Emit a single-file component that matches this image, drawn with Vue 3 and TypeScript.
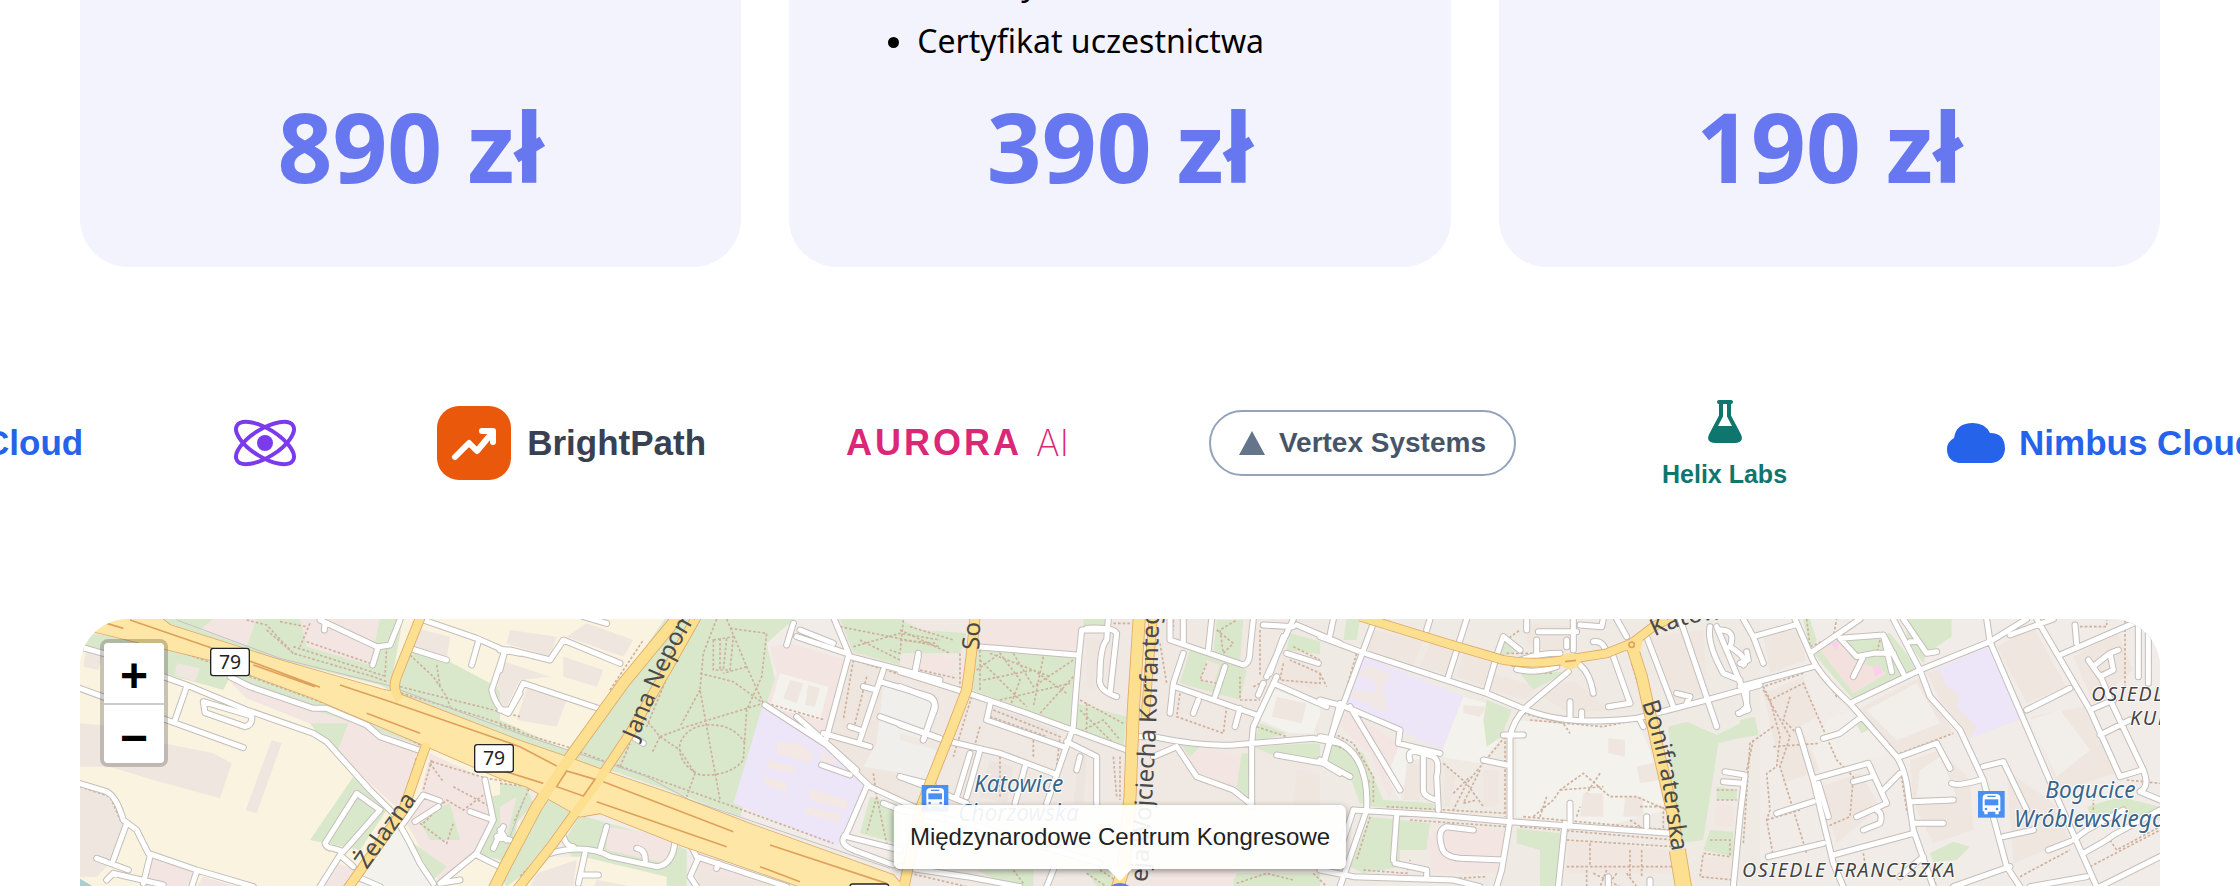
<script setup lang="ts">
interface Plan {
  price: string
  perks: string[]
}

interface Area {
  fill: string
  d: string
}

interface Tile {
  x: number
  areas: Area[]
  paths: string
  streets: string
}

interface MainRoad {
  width: number
  d: string
}

const plans: Plan[] = [
  { price: '890 zł', perks: [] },
  { price: '390 zł', perks: ['Przerwy', 'Certyfikat uczestnictwa'] },
  { price: '190 zł', perks: [] },
]

const partners: string[] = ['nimbus', 'atom', 'bright', 'aurora', 'vertex', 'helix', 'nimbus']

const green = '#d9e8cb'
const pink = '#f3e5e2'
const built = '#efe6e0'
const cream = '#faf3df'
const pale = '#f4f2ed'
const school = '#ede5f8'

const tiles: Tile[] = [
  {
    x: 0,
    areas: [
      { fill: cream, d: 'M-20 0H1320V830H-20Z' },
      { fill: green, d: 'M-20 60L100 80L400 145L1020 400L1010 425L700 300L450 200L430 240L250 190L-20 110Z' },
      { fill: green, d: 'M250 20H970L930 240L900 225L600 150L270 60Z' },
      { fill: pink, d: 'M660 27H900L870 165L680 110ZM400 27H530L500 110L360 60Z' },
      { fill: green, d: 'M980 110L1100 150L1250 230L1320 330V400L950 250Z' },
      { fill: built, d: 'M1010 55L1110 80L1100 150L990 110ZM1270 140L1310 150L1285 245L1250 235ZM290 160L360 175L345 215L285 195ZM20 110L70 130L55 180L10 170Z' },
      { fill: pink, d: 'M430 195L700 300L1020 405L1010 430L970 610L780 440L740 360L500 265Z' },
      { fill: green, d: 'M690 340L805 340L770 430L720 380ZM820 500L920 600L840 720L690 690Z' },
      { fill: built, d: 'M0 340L110 350L250 400L400 430L455 460L420 565L220 510L90 470L0 470ZM575 390L605 400L530 610L497 600ZM-20 530L80 550L130 640L90 760L50 800H-20Z' },
      { fill: pale, d: 'M860 740L960 640L1060 830H820Z' },
      { fill: pink, d: 'M1050 430L1200 500L1240 620L1190 740L1080 820L980 640L1020 560Z' },
      { fill: green, d: 'M1230 560L1330 540L1290 760L1190 730L1230 640ZM1010 620L1110 580L1140 690L1050 690ZM1000 700L1100 770L1060 810Z' },
      { fill: pink, d: 'M220 740L340 785L320 830H190ZM370 800L470 830H350ZM720 830L770 760L830 780L800 830Z' },
      { fill: '#a9cfd4', d: 'M-10 800L40 830H-10Z' },
    ],
    paths:
      'M500 30L560 45L640 130L880 200L920 215M640 110L920 200M560 60L640 130M690 40L660 110M680 95L870 160M600 35L680 50M920 110L915 200M270 115L470 185L900 340L1020 405M990 135L1060 200L1100 260L1110 290M960 230L1320 320M950 245L1200 320L1320 360M1070 165L1080 230M1055 455L1220 505L1320 520M1050 460L1090 515M1120 530L1230 590M1030 640L1100 570L1150 600L1230 540M1020 640L1100 700L1120 640M1055 450L1030 540M975 560L1010 440M0 530L90 560L125 640',
    streets:
      'M-20 105L70 130M250 200L320 225L500 300L700 370L740 395L870 540L940 610L990 700L1020 760L1060 820M-20 228L260 330L490 413M320 230L285 330M370 275L515 318Q518 345 495 350L375 308ZM450 200L510 230L700 295L740 295L860 345L900 380L1030 425M720 30L890 110M735 40L733 60M960 30L930 105L895 110L878 165M990 115L1100 150M1030 30L1190 85L1270 120L1320 130M1195 95L1175 165M1275 120L1235 240Q1250 300 1285 310L1320 250M830 550L735 700Q740 715 760 715L790 725L900 600ZM-20 515L80 545Q110 560 130 630L170 660L205 730L350 780L520 830M140 640L100 750M50 745L145 780M210 740L190 820M350 785L335 830M80 810L100 790L250 825M720 830L780 735L820 770M830 800L900 830M970 640L1030 555L1080 573M1005 635L1075 590M1215 510L1240 630L1190 730L1080 820L1140 810M1190 735L1260 770M1170 605L1240 630M1270 650L1240 715M1250 680L1290 690',
  },
  {
    x: 1260,
    areas: [
      { fill: cream, d: 'M0 20H540L300 380L200 420L0 340Z' },
      { fill: built, d: 'M190 140L310 180L290 230L190 200ZM80 235L200 270L170 350L50 330ZM30 60L170 80L150 140L20 100ZM0 150L150 200L60 210L20 290L0 280ZM260 40L400 90L370 140L200 80Z' },
      { fill: green, d: 'M500 20L310 290L200 420L0 330V370L180 450L330 480L560 560L720 620L770 480L830 230L800 100L890 20Z' },
      { fill: pink, d: 'M810 110L870 100L1040 150L980 390L800 280L830 190Z' },
      { fill: pale, d: 'M840 190L985 230L960 330L810 290Z' },
      { fill: built, d: 'M870 210L910 220L890 280L850 265ZM925 225L960 235L945 290L915 285Z' },
      { fill: built, d: 'M1000 20H1320V600L1100 530L980 400L1050 140Z' },
      { fill: green, d: 'M1020 27H1320V200L1060 125Z' },
      { fill: '#f1efec', d: 'M1150 220L1300 270L1280 500L1090 470L1130 400Z' },
      { fill: school, d: 'M790 280L980 420L1100 530L1040 660L1010 710L700 580Z' },
      { fill: '#f3e8e4', d: 'M830 395L900 400L940 430L930 460L830 430ZM805 450L885 470V490L805 475ZM795 500L860 520V550L790 520ZM930 535L1040 570V600L930 570ZM915 590L1020 610V640L915 610ZM960 420L1010 450L970 480Z' },
      { fill: green, d: 'M1110 560L1190 580V700L1080 670ZM0 520L80 530L100 580L0 700ZM150 560L225 590L60 800L20 830L0 800ZM240 615L500 690L560 720L560 830H500L230 760L190 700Z' },
      { fill: pink, d: 'M320 650L520 680L500 760L320 720ZM590 750L720 780L860 830H590ZM0 590L50 560L20 680L0 690Z' },
      { fill: cream, d: 'M50 830L160 740L250 740L500 800V830Z' },
      { fill: built, d: 'M110 790L230 750L220 830H90ZM290 810L400 830H280ZM590 780L800 820V830H590Z' },
    ],
    paths:
      'M650 27L610 130L600 240L620 350L660 570M680 27L740 170L790 280M690 55L800 70L785 200L740 300L730 450Q690 500 600 495Q530 460 540 400Q560 350 620 345Q700 340 735 400M600 190L700 215L790 280L560 350L480 380L430 320M480 380L540 420L585 490L560 560M640 90L700 80L690 180L640 180ZM660 85V180M680 85L670 180M740 170L670 190M600 240L540 350M480 380L455 430M0 345L100 380L200 410L330 460M350 465L700 590L1000 700M560 60L440 350M360 470L390 400M0 520L90 530L40 640M250 620L330 600L540 690M240 610L60 800M150 560L230 580M800 280L975 330M1060 150L1030 330M1100 200L1060 360M1060 150L1320 230M1120 490L1130 560M1110 540L1300 600M1130 560L1100 670M1130 560L1160 700M1210 30L1200 130L1170 120M1020 50L1320 110M1060 110L1200 70L1320 90M1080 90L1200 150M330 240L430 90',
    streets:
      'M0 120L30 120L150 150L190 90L360 160M250 20L320 40M0 300L30 300L70 220L310 300M0 180L15 120M880 40L860 105M900 60L1000 100M1000 20L1050 140L1320 210M890 80L1040 130M1045 140L975 400M1150 180L1080 390M1090 230L1130 240M1140 215L1290 260Q1310 270 1300 300L1270 390M1140 320L1320 385M1255 140L1245 190M1050 350L1080 360M970 370L1110 410M795 285L980 405L1110 530L1240 590M890 320L1070 480M965 465L1050 495M1100 530L1040 670Q1010 700 1060 720L1180 765M1040 680L1200 720M1200 500L1300 525M1150 580L1200 600M405 385L430 400M150 730Q260 700 330 740L470 770Q520 765 525 690M320 650L300 720M410 715Q440 720 435 760M255 730L235 820M250 795L295 795M570 700L590 740L800 810L860 830M655 760L650 775M595 745L570 800L590 830M190 680Q200 710 220 710M0 660L20 690',
  },
  {
    x: 2460,
    areas: [
      { fill: '#f0e8e3', d: 'M0 20H1320V830H0Z' },
      { fill: '#f1efec', d: 'M0 240L100 280L60 385L0 370ZM0 390L110 420L80 510L0 500Z' },
      { fill: green, d: 'M0 27L60 60L200 70L180 130L0 130ZM230 110L525 145L510 350L215 240ZM530 280L680 320L670 410L520 370ZM550 27H620V50H550Z' },
      { fill: pink, d: 'M240 27H540L530 130L230 100ZM60 130L170 150L160 200L50 180ZM840 410L1050 440V580L890 500Z' },
      { fill: green, d: 'M870 120L960 140L1040 180L1020 270L840 220ZM950 30H1030L1020 160L940 130ZM1080 340L1160 370L1060 400ZM1060 410L1240 400L1320 410V450L1270 460L1130 440ZM1025 430H1050V570L1010 530ZM1170 70L1320 110V140L1160 120ZM840 400L900 410L870 440Z' },
      { fill: built, d: 'M920 150L960 165L940 225L900 210Z' },
      { fill: pale, d: 'M1110 235L1270 290L1240 370L1170 370L1080 330ZM1270 130L1320 140V270L1260 250Z' },
      { fill: built, d: 'M1130 260L1220 280L1205 340L1115 320ZM1150 140L1260 180L1250 240L1140 210ZM560 80L600 90L580 240L560 230ZM1190 480L1320 510V590H1180Z' },
      { fill: '#ece5df', d: 'M280 290L470 360L480 400L270 330ZM270 450L340 470L320 580L240 560ZM540 420L560 440L550 580H520Z' },
      { fill: green, d: 'M230 780H400V830H330ZM560 785L640 780V830H590ZM990 830L1010 790L1280 790V830Z' },
      { fill: pink, d: 'M760 780H1000V830H740Z' },
    ],
    paths:
      'M0 60L150 130M0 90L110 100M30 50L160 90M230 180L300 130L360 210L330 290M340 130L400 230L520 150M250 210L400 180L500 250M240 150L380 290M430 140L400 290M520 200L420 310M270 130L450 200M300 270L510 220M540 270L670 340M530 370L610 330L660 390M540 300L640 400M560 280L560 370M690 40H640M280 300L480 380L470 470M270 320L440 380M400 390V440M240 350L220 420M300 440V560M60 180L170 205M215 260L160 440M180 130V230M240 120V240M640 440L650 560M660 440V570M780 100L800 220M920 160L900 210L950 220M1020 200L1020 270L1080 270M840 250L830 320L970 370L980 290M1060 230L1100 210M950 60L1000 100L970 130L960 60L1010 30M1080 60V200M1150 160L1140 210L1260 220V190L1170 150M1180 110L1260 150M1070 350L1160 380M820 30V60M30 790L200 830M560 790L620 830M600 780L660 820M1010 820L1100 790L1180 810M1240 790L1280 830M340 780L370 820',
    streets:
      'M0 185L190 245L380 310L680 420M230 110L530 135M0 230L90 265Q115 280 100 310L70 390M55 130L45 185M545 60L620 60M545 60Q530 200 520 350L440 580M625 27L620 90Q600 110 600 200Q590 240 650 260M560 55Q640 50 650 70L630 250M0 345L130 390L300 430L460 490M210 430L170 560M240 420L200 560M260 330L490 410M270 285L260 330M375 470L345 580M500 395L590 440L590 585M540 440L530 480M0 500L80 530L200 580M810 27L810 90L1030 165Q1050 160 1050 120L1060 27M850 27L850 100M935 27L925 120M850 130L820 220L810 310M825 230L1070 315M975 170L945 260M895 270L880 310M1020 295L1005 350M760 380Q900 410 1000 405L1240 385L1320 400M700 380L760 380M760 440L830 410L890 500L1000 540L1050 580M1180 27L1100 200M1150 80L1110 190M1190 45L1320 100M1090 45L1180 50M1130 200L1060 350L1055 400L1055 590M1120 220L1280 290M1090 220L1075 255M1160 130L1255 160M1130 435L1270 460L1320 490M1320 280L1275 450M0 770L200 800L360 830M460 780L440 830M0 600L200 640L600 760',
  },
  {
    x: 3720,
    areas: [
      { fill: '#f0eae5', d: 'M0 20H1320V830H0Z' },
      { fill: built, d: 'M160 60L310 90L280 170L130 120ZM330 100L410 120L380 190L300 170ZM430 130L520 160L490 230L410 200ZM520 190L650 230L620 270L510 240ZM650 250L760 210L870 300L750 310ZM620 40L760 50L740 130L620 110ZM990 80L1150 60L1160 250L1060 280Z' },
      { fill: school, d: 'M125 135L430 260L365 420L80 280Z' },
      { fill: '#f1e8e6', d: 'M150 165L215 195L190 230L205 310L90 260L100 240L170 245L160 210L110 195Z' },
      { fill: pink, d: 'M80 300L110 320L240 400L240 470L210 570L150 430L60 350Z' },
      { fill: pale, d: 'M430 260L500 280L540 390L480 460L360 440ZM240 400L360 440L270 450L240 570L200 500ZM590 330Q800 350 950 330L990 420L1040 600L850 650L590 620Z' },
      { fill: green, d: 'M500 270L575 300L545 380L500 410L490 330ZM1045 350L1100 335L1190 375L1300 320L1315 370L1195 400L1150 690L1080 700L1060 540ZM30 380L130 430L190 570L340 580V600L160 590L120 580L90 500L20 450ZM150 620L330 640L320 720H240V770L130 790L90 770ZM590 655L720 670V830H660V720L590 700ZM1190 530L1250 540V570L1190 570ZM1170 660L1240 665V740L1150 720ZM80 27H120L110 90L70 90ZM550 80L600 120L540 140ZM600 190L740 185L640 240Z' },
      { fill: built, d: 'M865 385L915 390V440L865 430ZM950 470L1010 455L1020 510L960 520ZM790 550H850V620H780ZM915 560H970V620H910ZM260 460H300V570H250ZM375 470L410 490L390 590H370ZM490 480H535V590H490ZM430 285L500 290L480 320L430 310Z' },
      { fill: pink, d: 'M370 640L560 660L550 790L340 790L320 690Z' },
      { fill: '#f1e6e0', d: 'M740 690L1050 720V790H740ZM1150 740H1240V810H1140ZM1190 580L1240 590V650H1180Z' },
    ],
    paths:
      'M610 310L730 340L750 370M630 330L850 350L950 330M555 380L440 520L400 600M370 460L440 520L490 590M480 480L430 580L470 570M400 550L450 500M555 380V620M640 620L700 570L720 540L790 490L870 560L950 560L1040 600M840 490L800 550M720 540L850 530M680 560L660 620M200 590L560 610M270 630L560 650M610 620L1050 660M770 620L780 590M960 590H1030V660M930 630L960 650M600 650L1060 690M740 690L1060 710M810 700V770M930 720V800M965 720V800M740 770H1060M800 780V830M860 780L840 830M920 790L950 830M820 790L900 830M890 790L860 830M40 370L100 400L160 500V580M30 400L100 430L150 520M1300 390L1280 480M1190 540H1250M1190 570H1250M1170 690H1230V740L1150 730L1140 800L1240 810M935 160L965 260M130 780L260 790L270 750M320 810L500 800M150 620L110 750M545 100L600 60M560 130L650 130M590 185L700 190M110 130L60 300L30 390M0 190L20 230',
    streets:
      'M0 80L120 125L500 250L620 300Q750 350 950 325L1160 270L1320 225M160 40L30 390L10 460M320 60L330 27M440 27L385 200M525 155L500 240M550 80L525 150M550 80L600 120M40 27L30 75M620 27V60M655 65H770M650 90V140M580 160Q640 130 720 130M590 178Q650 192 710 170M740 90V110M760 27V120M850 27L845 50L780 45M820 95Q850 90 860 130M745 185L620 290Q580 330 570 380L570 630L545 780L530 830M550 375H610M780 165Q810 190 820 250M880 140L930 280L865 290M750 275V325M785 305V330M890 27L920 80M980 80L1060 290M1080 27L1190 350M1170 50Q1160 100 1210 190L1260 210M1190 50L1270 240L1285 300L1255 310M1200 60Q1250 60 1230 110Q1290 150 1270 165M1070 250L1110 260L1100 280M960 330L970 350M0 270L75 290L240 360L235 400L360 430M90 290L240 540M0 380Q150 400 140 600L60 830M0 450L90 500M270 450Q260 420 290 425L340 440Q360 450 350 500L355 600M310 440V540Q310 560 350 570M100 600L350 615L570 635L1050 670M100 600L70 690M490 450L560 465M750 580V640M735 640L715 830M980 620V650M230 615L220 750M225 760L320 780V800M460 660L380 650Q350 660 365 710Q370 740 420 745L550 750M0 780L100 800L400 810L480 830M1215 485L1275 495L1260 620L1240 830M1210 515L1265 520M865 800V830M990 810V830',
  },
  {
    x: 4980,
    areas: [
      { fill: '#f1ece7', d: 'M60 20H1300V830H60Z' },
      { fill: built, d: 'M350 300L540 200L640 370L480 440ZM70 80L170 60L200 150L90 190ZM70 250L190 200L230 320L180 350L240 480L130 520ZM240 530L360 490L420 590L290 700ZM510 450L600 420L690 510L700 660L580 700L520 580ZM770 110L880 50L980 230L860 280ZM1000 140L1130 60L1180 180L1060 280ZM870 320L1030 290L1130 490L960 540ZM800 480L940 580L990 690L820 760Z' },
      { fill: '#f2efea', d: 'M380 300L530 220L600 340L470 390ZM260 330L340 300L450 430L240 490L220 420ZM870 330L960 300L1050 420L950 500ZM540 480L600 440L650 560L530 560Z' },
      { fill: green, d: 'M220 130L290 90L450 70L540 180L340 270ZM500 27H635V80L560 130L550 160L500 90ZM0 330L45 320L55 375L0 385ZM350 345L370 330L385 360L365 370ZM570 730L640 695L690 710L650 750L580 755ZM1040 590L1140 560L1260 590V630L1050 610ZM190 27H210L230 90L210 120Z' },
      { fill: '#f3e1de', d: 'M240 120L300 90L340 150L400 170L440 190L340 250Z' },
      { fill: '#fbd0ec', d: 'M400 170L420 165L425 190L405 200ZM270 100L300 90L290 120Z' },
      { fill: school, d: 'M560 190L755 105L850 325L690 385L600 270Z' },
      { fill: '#f0e6e0', d: 'M560 190L600 180L620 230L660 250L650 290L710 350L690 385L600 270Z' },
    ],
    paths:
      'M190 190L70 230L90 270L190 220L290 450L340 500L330 620L260 650M90 270L120 380L110 470L80 490L90 600L80 630L100 740M70 240L150 380L120 470L200 730M100 350L30 400L10 700M150 260L130 330L180 380M100 410L240 400M210 120L290 260L330 270M200 27L210 110L280 80L290 27M420 90L410 130M480 430L640 370M550 170L760 85M80 630L180 600M840 800L990 720M1050 770L1260 660M1110 690L1130 720L1260 650M1155 30V230M1020 50H1100V30M1060 600V570M1160 510L1260 520M480 470L500 600L590 830M370 730L380 790',
    streets:
      'M10 27L40 80L165 45M40 80L70 160M0 160L25 150L20 125M0 230L220 170M20 230L20 290L0 310M165 27L210 130Q230 190 330 280L470 440Q490 470 500 520L520 660L580 830M210 130L360 27M300 85L430 75L490 190M300 85L350 140L400 130L460 130M430 75L455 185M370 140L340 200M340 275L540 180L750 95L860 27M460 27L540 180L570 260L660 360L730 510L800 770L840 830M490 27L560 130L590 125M510 95L525 95M740 27L750 95L950 560L1070 830M810 75L940 27M890 27L1050 300L1140 500M960 135L1180 40M1005 45L1010 100M860 300L990 235M1045 150L1080 200L1120 180L1110 130L1065 165M1110 130L1135 120M1050 300L1120 270M1080 195L1120 290L1210 480Q1230 530 1200 545L1260 570M1080 375L1170 330M1140 500L1205 480M1195 50V200M1225 70V220M365 320L300 370L250 385M175 360L220 510L280 760L310 830M225 505L385 460L440 580L350 620M235 520L265 620M340 515L395 500M430 540L480 490M110 610L220 575M85 740L250 700M370 660L420 640Q430 610 410 600M480 440L590 400L630 475M515 575L640 570M520 640L610 640M280 735L520 670M635 520Q650 530 720 510M730 470L790 455L860 600M790 680L880 660M925 720L990 695M1000 690L1040 660L1150 600M1030 730L1100 690L1120 675L1260 600M640 830L810 770M870 830L1040 800M1080 830L1260 740M480 800L550 740',
  },
]

const mainRoads: MainRoad[] = [
  { width: 26, d: 'M1022 20L950 200Q935 240 960 270M1040 400L970 600L800 840' },
  { width: 32, d: 'M1795 20L1630 220L1450 470L1370 590L1280 760L1240 840' },
  { width: 26, d: 'M1850 20L1760 180L1650 370L1550 520L1420 700L1310 840' },
  { width: 28, d: 'M2685 20Q2675 140 2660 240L2610 370L2550 520L2520 600L2470 840' },
  { width: 34, d: 'M3178 20L3160 300L3150 560L3130 780L3110 840' },
  { width: 22, d: 'M3220 20L3205 200L3195 330' },
  { width: 24, d: 'M3840 20L4100 100L4270 150Q4360 165 4440 152L4580 130L4655 100L4720 50L4780 20' },
  { width: 32, d: 'M4655 105L4685 200L4730 400L4780 620L4790 700' },
  { width: 46, d: 'M4792 720L4812 840' },
]

const highway =
  'M-20 20L240 20L270 45L600 150L905 238L940 245L1320 392L1460 440L1590 488L1800 560L2020 645L2440 795L2480 840L2160 830L1800 705L1560 610L1500 620L1340 530L1260 505L1030 405L700 265L510 195L390 150L30 62L-20 55Z'

const laneMarks =
  'M80 40L130 55M150 30L500 150L720 232M520 165L705 230M780 225L940 278L1320 410L1430 468M860 310L1020 370M1260 480L1390 520M1570 515L1960 665M1550 575L1940 710M2070 705L2420 820M2040 770L2160 815M1430 530L1460 483L1545 508L1510 558Z'

const rails = 'M290 30L600 145L920 225L1320 372L1590 462L1700 500L1830 570L2430 775M1370 420L1340 540M1335 560L1290 680M1378 420L1348 540'
</script>

<template>
  <main class="page">
    <section class="pricing" aria-label="Cennik">
      <article v-for="plan in plans" :key="plan.price" class="plan">
        <ul v-if="plan.perks.length" class="perks">
          <li v-for="perk in plan.perks" :key="perk">{{ perk }}</li>
        </ul>
        <p class="price">{{ plan.price }}</p>
      </article>
    </section>

    <section class="partners" aria-label="Partnerzy">
      <ul class="track">
        <li v-for="(partner, i) in partners" :key="i" :class="['logo', partner]">
          <template v-if="partner === 'nimbus'">
            <svg class="cloud" viewBox="0 0 58 40" aria-hidden="true">
              <path d="M12 40Q0 38 0 26Q0 19 7 15Q9 0 26 0Q38 0 43 10Q58 10 58 26Q57 38 45 40Z" fill="#2563eb" />
            </svg>
            <span>Nimbus Cloud</span>
          </template>
          <svg v-else-if="partner === 'atom'" class="orbit" viewBox="-32 -24 64 48" role="img" aria-label="Atom">
            <g fill="none" stroke="#7c3aed" stroke-width="4">
              <ellipse rx="33" ry="14" transform="rotate(32)" />
              <ellipse rx="33" ry="14" transform="rotate(-32)" />
            </g>
            <circle r="8" fill="#7c3aed" />
          </svg>
          <template v-else-if="partner === 'bright'">
            <svg class="badge" viewBox="0 0 74 74" aria-hidden="true">
              <rect width="74" height="74" rx="22" fill="#ea580c" />
              <path d="M18 51L32 37L40 45L55 27M45 25H56V36" fill="none" stroke="#fff" stroke-width="6" stroke-linecap="round" stroke-linejoin="round" />
            </svg>
            <span>BrightPath</span>
          </template>
          <template v-else-if="partner === 'aurora'">
            <strong>AURORA</strong><span class="thin">AI</span>
          </template>
          <template v-else-if="partner === 'vertex'">
            <svg class="peak" viewBox="0 0 26 24" aria-hidden="true"><path d="M13 0L26 24H0Z" fill="#64748b" /></svg>
            <span>Vertex Systems</span>
          </template>
          <template v-else>
            <svg class="flask" viewBox="0 0 34 43" aria-hidden="true">
              <path d="M11 2H23M13 3V16L3 35Q0 41 7 41H27Q34 41 31 35L21 16V3" fill="none" stroke="#0f766e" stroke-width="4" stroke-linecap="round" />
              <path d="M9 26H25L32 36Q33 42 27 42H7Q1 42 2 36Z" fill="#0f766e" />
            </svg>
            <span>Helix Labs</span>
          </template>
        </li>
      </ul>
    </section>

    <section class="map" aria-label="Mapa dojazdu">
      <svg class="canvas" viewBox="0 27 6240 801" role="img" aria-label="Katowice">
        <defs>
          <path id="zelazna" d="M860 780L1095 450" />
          <path id="jana" d="M1672 392L1740 230Q1800 90 1900 -60" />
          <path id="wojciecha" d="M3202 817L3228 360L3243 -200" />
          <path id="sokolska" d="M2698 120L2706 -120" />
          <path id="bonifraterska" d="M4686 278Q4735 430 4753 560Q4765 660 4788 800" />
          <path id="katowicka" d="M4724 80Q4800 40 4900 30L5040 -20" />
        </defs>

        <g v-for="tile in tiles" :key="'a' + tile.x" :transform="`translate(${tile.x} 0)`">
          <path v-for="(area, i) in tile.areas" :key="i" :d="area.d" :fill="area.fill" />
        </g>
        <g v-for="tile in tiles" :key="'p' + tile.x" :transform="`translate(${tile.x} 0)`">
          <path :d="tile.paths" class="footpath" />
        </g>
        <path :d="rails" class="rail" />
        <g v-for="tile in tiles" :key="'c' + tile.x" :transform="`translate(${tile.x} 0)`">
          <path :d="tile.streets" class="street-edge" />
        </g>
        <g v-for="tile in tiles" :key="'s' + tile.x" :transform="`translate(${tile.x} 0)`">
          <path :d="tile.streets" class="street" />
        </g>

        <path :d="highway" class="main-edge" stroke-width="5" />
        <path v-for="(road, i) in mainRoads" :key="'e' + i" :d="road.d" class="main-edge" :stroke-width="road.width + 5" />
        <path :d="highway" fill="#fee7a6" />
        <path v-for="(road, i) in mainRoads" :key="'m' + i" :d="road.d" class="main-road" :stroke-width="road.width" />
        <path :d="laneMarks" class="lane" />
        <ellipse cx="4470" cy="153" rx="32" ry="24" fill="#fde08f" />
        <path d="M4455 155L4488 151" class="lane" />
        <path d="M4625 118L4655 85L4690 85L4680 125Z" fill="#fde08f" />
        <circle cx="4655" cy="104" r="8" class="lane" />

        <g class="street-name">
          <text><textPath href="#zelazna">Żelazna</textPath></text>
          <text><textPath href="#jana">Jana Nepomucena</textPath></text>
          <text><textPath href="#wojciecha">eja Wojciecha Korfantego</textPath></text>
          <text><textPath href="#sokolska">So</textPath></text>
          <text><textPath href="#bonifraterska">Bonifraterska</textPath></text>
          <text><textPath href="#katowicka">Katowicka</textPath></text>
        </g>

        <g class="stop-name">
          <text x="2682" y="547">Katowice</text>
          <text x="2634" y="633">Chorzowska</text>
          <text x="5896" y="565">Bogucice</text>
          <text x="5802" y="652">Wróblewskiego</text>
        </g>
        <g class="district">
          <text x="4986" y="800">OSIEDLE FRANCISZKA</text>
          <text x="6034" y="272">OSIEDLE</text>
          <text x="6150" y="346">KUR</text>
        </g>

        <g v-for="stop in [{ x: 2525, y: 525 }, { x: 5694, y: 543 }]" :key="stop.x" :transform="`translate(${stop.x} ${stop.y})`">
          <rect width="80" height="80" fill="#4a90f2" />
          <path d="M14 60V20Q14 9 27 9H54Q67 9 67 20V60L62 62V70H52V62H29V70H19V62Z" fill="#fff" />
          <path d="M20 25H61V43H20Z" fill="#4a90f2" />
          <path d="M28 16H53" stroke="#4a90f2" stroke-width="4" />
          <circle cx="24" cy="54" r="4" fill="#4a90f2" />
          <circle cx="57" cy="54" r="4" fill="#4a90f2" />
        </g>

        <g v-for="sign in [{ x: 392, y: 115 }, { x: 1184, y: 404 }, { x: 2310, y: 822 }]" :key="sign.x" :transform="`translate(${sign.x} ${sign.y})`" class="shield">
          <rect width="116" height="82" rx="8" />
          <text x="58" y="61">79</text>
        </g>
      </svg>

      <div class="zoom">
        <button type="button" aria-label="Przybliż">+</button>
        <button type="button" aria-label="Oddal">−</button>
      </div>
      <span class="pin"></span>
      <div class="tooltip" role="tooltip">Międzynarodowe Centrum Kongresowe</div>
    </section>
  </main>
</template>

<style>
body {
  margin: 0;
  background: #fff;
}
</style>

<style scoped>
.page {
  height: 100vh;
  overflow: hidden;
  font-family: 'Noto Sans', sans-serif;
  color: #000;
}

.pricing {
  display: grid;
  grid-template-columns: repeat(3, 1fr);
  gap: 48px;
  margin: -46px 80px 0;
}

.plan {
  display: flex;
  flex-direction: column;
  justify-content: flex-end;
  padding: 0 80px 56px;
  border-radius: 0 0 48px 48px;
  background: #f2f3fd;
}

.perks {
  margin: 0 0 10px;
  padding-left: 48px;
  font-size: 32px;
  line-height: 58px;
}

.price {
  margin: 0;
  color: #6777ef;
  font-size: 96px;
  font-weight: 700;
  line-height: 131px;
  text-align: center;
}

.partners {
  padding: 128px 0;
  overflow: hidden;
}

.track {
  display: flex;
  align-items: center;
  gap: 140px;
  width: max-content;
  height: 96px;
  margin: 0 0 0 -226px;
  padding: 0;
  list-style: none;
  font-family: 'Liberation Sans', Arial, sans-serif;
  font-weight: 700;
}

.logo {
  display: flex;
  align-items: center;
  white-space: nowrap;
}

.logo svg {
  display: block;
  flex: none;
}

.nimbus {
  gap: 14px;
  color: #2563eb;
  font-size: 35px;
}

.cloud {
  width: 58px;
  height: 40px;
}

.atom {
  padding-left: 10px;
}

.orbit {
  width: 64px;
  height: 48px;
}

.bright {
  gap: 16px;
  color: #374151;
  font-size: 35px;
}

.badge {
  width: 74px;
  height: 74px;
}

.aurora {
  gap: 14px;
  color: #db2777;
  font-size: 36px;
}

.aurora strong {
  letter-spacing: 3px;
}

.thin {
  font-family: Inter, sans-serif;
  font-weight: 200;
}

.vertex {
  box-sizing: border-box;
  gap: 14px;
  height: 66px;
  padding: 0 28px;
  border: 2px solid #94a3b8;
  border-radius: 33px;
  color: #475569;
  font-size: 28px;
}

.peak {
  width: 26px;
  height: 24px;
}

.helix {
  flex-direction: column;
  gap: 16px;
  padding: 2px 20px 0 6px;
  color: #0f766e;
  font-size: 25px;
  line-height: 30px;
}

.flask {
  width: 34px;
  height: 43px;
}

.map {
  position: relative;
  margin: 0 80px;
  overflow: hidden;
  border-radius: 48px 48px 0 0;
  background: #f1ece7;
}

.canvas {
  display: block;
  width: 100%;
}

.footpath {
  fill: none;
  stroke: #ceb09c;
  stroke-width: 5;
  stroke-dasharray: 8 6;
}

.rail {
  fill: none;
  stroke: #c4c2c0;
  stroke-width: 3;
}

.street-edge,
.street {
  fill: none;
  stroke-linecap: round;
  stroke-linejoin: round;
}

.street-edge {
  stroke: #c4bebb;
  stroke-width: 21;
}

.street {
  stroke: #fff;
  stroke-width: 15;
}

.main-edge {
  fill: none;
  stroke: #dfa968;
}

.main-road {
  fill: none;
  stroke: #fde08f;
}

.lane {
  fill: none;
  stroke: #dfa05c;
  stroke-width: 5;
}

.street-name {
  fill: #4a4a4a;
  font-size: 72px;
}

.stop-name {
  fill: #39658c;
  stroke: #fff;
  stroke-width: 6;
  paint-order: stroke;
  font-size: 68px;
  font-style: italic;
}

.district {
  fill: #444;
  stroke: #fff;
  stroke-width: 5;
  paint-order: stroke;
  font-size: 59px;
  font-style: italic;
  letter-spacing: 5px;
}

.shield rect {
  fill: #fff;
  stroke: #222;
  stroke-width: 4;
}

.shield text {
  fill: #222;
  font-size: 58px;
  text-anchor: middle;
}

.zoom {
  position: absolute;
  top: 20px;
  left: 20px;
  overflow: hidden;
  border: 4px solid rgba(0, 0, 0, 0.2);
  border-radius: 8px;
  background-clip: padding-box;
}

.zoom button {
  display: block;
  width: 60px;
  height: 60px;
  padding: 0;
  border: 0;
  background: #fff;
  color: #000;
  font: 700 48px/66px 'Liberation Sans', sans-serif;
}

.zoom button + button {
  border-top: 2px solid #ccc;
}

.tooltip {
  position: absolute;
  top: 186px;
  left: 50%;
  padding: 0 16px;
  transform: translateX(-50%);
  border-radius: 6px;
  background: rgba(255, 255, 255, 0.92);
  box-shadow: 0 2px 6px rgba(0, 0, 0, 0.4);
  color: #222;
  font: 24px/64px 'Liberation Sans', Arial, sans-serif;
  white-space: nowrap;
}

.tooltip::after {
  content: '';
  position: absolute;
  top: 100%;
  left: 50%;
  margin-left: -12px;
  border: 12px solid transparent;
  border-top-color: #fff;
}

.pin {
  position: absolute;
  top: 264px;
  left: 50%;
  width: 32px;
  height: 32px;
  margin-left: -16px;
  border-radius: 50%;
  background: #6777ef;
}
</style>
